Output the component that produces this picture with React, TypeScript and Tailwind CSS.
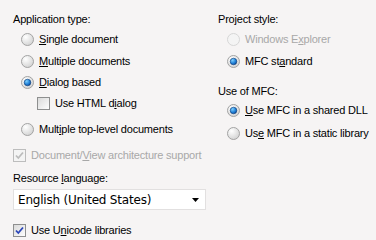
import type { ReactNode } from "react";

const font = { fontFamily: '"Liberation Sans", Arial, sans-serif' };

function Radio({ checked, disabled }: { checked?: boolean; disabled?: boolean }) {
  return (
    <svg width="13" height="13" viewBox="0 0 13 13" className="shrink-0">
      <defs>
        <radialGradient id="rbg" cx="0.35" cy="0.3" r="0.8">
          <stop offset="0" stopColor="#ffffff" />
          <stop offset="1" stopColor="#cfcfcf" />
        </radialGradient>
        <radialGradient id="rdot" cx="0.35" cy="0.3" r="0.8">
          <stop offset="0" stopColor="#7fd0ff" />
          <stop offset="0.6" stopColor="#1f7fd6" />
          <stop offset="1" stopColor="#0b3f8a" />
        </radialGradient>
      </defs>
      <circle
        cx="6.5"
        cy="6.5"
        r="6"
        fill={disabled ? "#f4f4f4" : "url(#rbg)"}
        stroke={disabled ? "#d6d6d6" : "#a3a3a3"}
      />
      {checked && <circle cx="6.5" cy="6.5" r="3.3" fill="url(#rdot)" stroke="#0a3a78" strokeWidth="0.6" />}
    </svg>
  );
}

function Check({ checked, disabled }: { checked?: boolean; disabled?: boolean }) {
  return (
    <svg width="13" height="13" viewBox="0 0 13 13" className="shrink-0">
      <defs>
        <linearGradient id="cbg" x1="0" y1="0" x2="1" y2="1">
          <stop offset="0" stopColor="#d8d8d8" />
          <stop offset="1" stopColor="#ffffff" />
        </linearGradient>
      </defs>
      <rect
        x="0.5"
        y="0.5"
        width="12"
        height="12"
        fill={disabled ? "#f4f4f4" : "url(#cbg)"}
        stroke={disabled ? "#bdbdbd" : "#8e8f8f"}
      />
      {checked && (
        <path
          d="M3 6.5 L5.3 9 L10 3.5"
          fill="none"
          stroke={disabled ? "#bcbcbc" : "#2a45b8"}
          strokeWidth="1.8"
        />
      )}
    </svg>
  );
}

function Row({
  control,
  children,
  disabled,
  className,
}: {
  control: ReactNode;
  children: ReactNode;
  disabled?: boolean;
  className?: string;
}) {
  return (
    <div className={`flex items-center gap-[5px] h-[13px] ${className ?? ""}`}>
      {control}
      <span className={`leading-none whitespace-nowrap ${disabled ? "text-[#a8a8a8]" : "text-black"}`}>
        {children}
      </span>
    </div>
  );
}

export default function App() {
  return (
    <div
      className="w-[376px] h-[240px] bg-[#f6f4f4] text-[11px] tracking-[-0.2px] relative overflow-hidden"
      style={font}
    >
      <div className="flex pt-[14px]">
        {/* left column */}
        <div className="w-[205px] pl-[13px] flex flex-col">
          <div className="leading-none h-[11px]">Application type:</div>
          <div className="pl-[8px] flex flex-col">
            <Row control={<Radio />} className="mt-[8px]">
              <u>S</u>ingle document
            </Row>
            <Row control={<Radio />} className="mt-[9px]">
              <u>M</u>ultiple documents
            </Row>
            <Row control={<Radio checked />} className="mt-[8px]">
              <u>D</u>ialog based
            </Row>
            <div className="pl-[16px]">
              <Row control={<Check />} className="mt-[8px]">
                Use HTML d<u>i</u>alog
              </Row>
            </div>
            <Row control={<Radio />} className="mt-[13px]">
              Mult<u>i</u>ple top-level documents
            </Row>
          </div>
          <Row control={<Check checked disabled />} disabled className="mt-[13px]">
            Document/<u>V</u>iew architecture support
          </Row>
          <div className="leading-none h-[11px] mt-[11px]">
            Resource <u>l</u>anguage:
          </div>
          <div className="mt-[5px] h-[21px] w-[193px] bg-white border border-[#e2e0e0] flex items-center justify-between pl-[4px] pr-[6px]">
            <span
              className="text-[12px] leading-none tracking-[-0.2px]"
              style={{ fontFamily: '"DejaVu Sans", Verdana, sans-serif' }}
            >
              English (United States)
            </span>
            <svg width="7" height="4" viewBox="0 0 7 4">
              <path d="M0 0 H7 L3.5 4 Z" fill="#000" />
            </svg>
          </div>
          <Row control={<Check checked />} className="mt-[14px]">
            Use U<u>n</u>icode libraries
          </Row>
        </div>
        {/* right column */}
        <div className="pl-[13px] flex flex-col">
          <div className="leading-none h-[11px]">Project style:</div>
          <div className="pl-[9px] flex flex-col">
            <Row control={<Radio disabled />} disabled className="mt-[8px]">
              Windows E<u>x</u>plorer
            </Row>
            <Row control={<Radio checked />} className="mt-[9px]">
              MFC st<u>a</u>ndard
            </Row>
          </div>
          <div className="leading-none h-[11px] mt-[18px]">Use of MFC:</div>
          <div className="pl-[9px] flex flex-col">
            <Row control={<Radio checked />} className="mt-[7px]">
              <u>U</u>se MFC in a shared DLL
            </Row>
            <Row control={<Radio />} className="mt-[10px]">
              Us<u>e</u> MFC in a static library
            </Row>
          </div>
        </div>
      </div>
    </div>
  );
}
